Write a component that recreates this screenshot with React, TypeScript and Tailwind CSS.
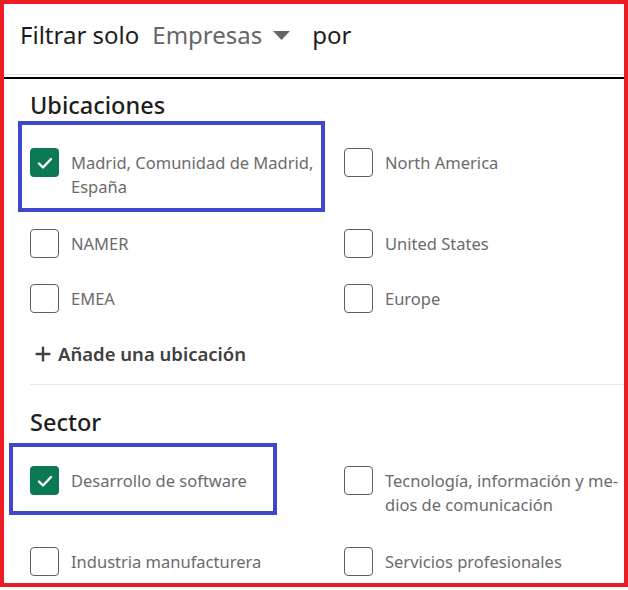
import { Plus } from "lucide-react"

type Item = { label: string; checked?: boolean; mark?: string }

const ubicaciones: Item[] = [
    { label: "Madrid, Comunidad de Madrid,\nEspaña", checked: true, mark: "left-[-12px] top-[-27px] w-[307px] h-[91px]" },
    { label: "North America" },
    { label: "NAMER" },
    { label: "United States" },
    { label: "EMEA" },
    { label: "Europe" },
]

const sectores: Item[] = [
    { label: "Desarrollo de software", checked: true, mark: "left-[-21px] top-[-23px] w-[268px] h-[72px]" },
    { label: "Tecnología, información y me-\ndios de comunicación" },
    { label: "Industria manufacturera" },
    { label: "Servicios profesionales" },
]

function Check({ item }: { item: Item }) {
    return (
        <label className="relative flex items-start gap-3">
            {item.mark && (
                <span className={`pointer-events-none absolute border-4 border-[#3f48cc] ${item.mark}`} />
            )}
            {item.checked ? (
                <span className="flex h-[29px] w-[29px] shrink-0 items-center justify-center rounded-[4px] bg-[#0b7a52]">
                    <svg width="20" height="20" viewBox="0 0 20 20" fill="none">
                        <path d="M4 10.5l4 4 8-8.5" stroke="white" strokeWidth="2.4" strokeLinecap="round" strokeLinejoin="round" />
                    </svg>
                </span>
            ) : (
                <span className="h-[29px] w-[29px] shrink-0 rounded-[4px] border border-[#5f5f5f] bg-white" />
            )}
            <span className="whitespace-pre-line pt-[3px] text-[16.5px] leading-[24px] text-[#6b6b6b]">{item.label}</span>
        </label>
    )
}

function Grid({ items }: { items: Item[] }) {
    return (
        <div className="grid grid-cols-[314px_1fr] gap-y-[26px]">
            {items.map((it, i) => (
                <div key={i} className={i < 2 ? "min-h-[55px]" : ""}>
                    <Check item={it} />
                </div>
            ))}
        </div>
    )
}

export default function App() {
    return (
        <div className="h-[590px] w-[628px] bg-white" style={{ fontFamily: '"Noto Sans", "Open Sans", sans-serif' }}>
            <div className="h-[587px] overflow-hidden border-4 border-[#ed1c24]">
                <div className="flex h-[71px] items-center border-b border-[#e4e4e4] pb-2 pl-4 text-[24px] text-[#1d1d1d]">
                    <span>Filtrar solo</span>
                    <span className="ml-[13px] flex items-center text-[#666666]">
                        Empresas
                        <svg className="ml-[11px]" width="17" height="9" viewBox="0 0 17 9">
                            <path d="M0 0h17L8.5 9z" fill="#666666" />
                        </svg>
                    </span>
                    <span className="ml-[22px]">por</span>
                </div>
                <div className="mt-[2px] h-[2px] bg-black" />

                <div className="pl-[26px]">
                    <h2 className="pt-[12px] text-[23.5px] font-medium leading-[28px] text-[#1d1d1d]">Ubicaciones</h2>
                    <div className="mt-[29px]">
                        <Grid items={ubicaciones} />
                    </div>
                    <button className="mt-[29px] flex items-center gap-1 pl-[2px] text-[18.5px] font-semibold leading-[24px] text-[#404040]">
                        <Plus size={22} strokeWidth={2.6} />
                        Añade una ubicación
                    </button>
                    <div className="mt-[18px] h-px bg-[#e6e6e6]" />

                    <h2 className="mt-[23px] text-[23.5px] font-medium leading-[28px] text-[#1d1d1d]">Sector</h2>
                    <div className="mt-[30px]">
                        <Grid items={sectores} />
                    </div>
                </div>
            </div>
        </div>
    )
}
